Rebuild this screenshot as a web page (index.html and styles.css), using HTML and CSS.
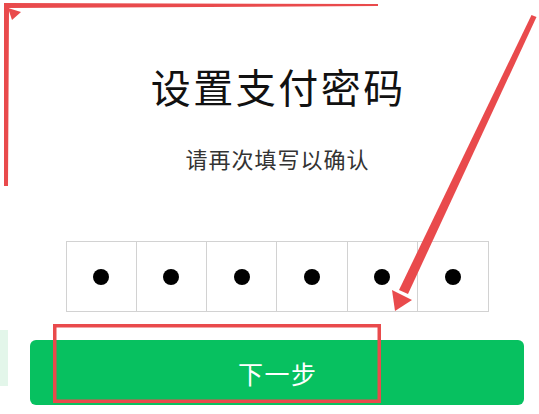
FILE: index.html
```html
<!DOCTYPE html>
<html lang="zh-CN">
<head>
<meta charset="utf-8">
<title>设置支付密码</title>
<link rel="stylesheet" href="styles.css">
</head>
<body>
<div class="page">
  <h1 class="title">设置支付密码</h1>
  <p class="subtitle">请再次填写以确认</p>
  <div class="pin">
    <div class="cell"><span class="dot"></span></div>
    <div class="cell"><span class="dot"></span></div>
    <div class="cell"><span class="dot"></span></div>
    <div class="cell"><span class="dot"></span></div>
    <div class="cell"><span class="dot"></span></div>
    <div class="cell"><span class="dot"></span></div>
  </div>
  <button class="next" type="button">下一步</button>
</div>
<svg class="marks" width="539" height="414" viewBox="0 0 539 414" xmlns="http://www.w3.org/2000/svg">
  <rect x="0" y="330" width="8" height="56" fill="#e3f6ea"/>
  <polygon points="4,3 378,4 378,6 9,8 8,186 4,186" fill="#e94a4c"/>
  <polygon points="8,8 21,12 12,20" fill="#e94a4c"/>
  <polygon points="536.5,17 531.5,15 399,290 408,294" fill="#e94a4c"/>
  <polygon points="395,311 392,290 412,300" fill="#e94a4c"/>
  <rect x="54.75" y="325.75" width="324.5" height="75.5" fill="none" stroke="#e94a4c" stroke-width="3.5"/>
</svg>
</body>
</html>
```
FILE: styles.css
```css
html, body {
  margin: 0;
  padding: 0;
  background: #ffffff;
}

body {
  font-family: "Noto Sans CJK SC", "Noto Sans", sans-serif;
  width: 539px;
  height: 414px;
  overflow: hidden;
  position: relative;
}

.page {
  padding: 66px 15px 0 30px;
  display: flex;
  flex-direction: column;
  align-items: center;
}

.title {
  margin: 0;
  font-size: 40px;
  line-height: 40px;
  font-weight: 400;
  color: #111111;
  letter-spacing: 2.5px;
  padding-left: 2.5px;
}

.subtitle {
  margin: 41px 0 0 0;
  font-size: 22px;
  line-height: 22px;
  color: #333333;
  letter-spacing: 1px;
  padding-left: 1px;
}

.pin {
  margin-top: 72px;
  display: flex;
  width: 423px;
  height: 71px;
  box-sizing: border-box;
  border: 1px solid #d2d2d2;
}

.cell {
  flex: 1;
  display: flex;
  align-items: center;
  justify-content: center;
  border-left: 1px solid #d2d2d2;
}

.cell:first-child {
  border-left: none;
}

.dot {
  width: 16px;
  height: 16px;
  border-radius: 50%;
  background: #000000;
}

.next {
  margin-top: 28px;
  width: 100%;
  height: 65px;
  border: none;
  border-radius: 6px;
  background: #07c160;
  color: #ffffff;
  font-family: "Noto Sans CJK SC", "Noto Sans", sans-serif;
  font-size: 25px;
  letter-spacing: 1.5px;
  padding: 0 0 0 1.5px;
}

.marks {
  position: absolute;
  left: 0;
  top: 0;
  pointer-events: none;
}
```
